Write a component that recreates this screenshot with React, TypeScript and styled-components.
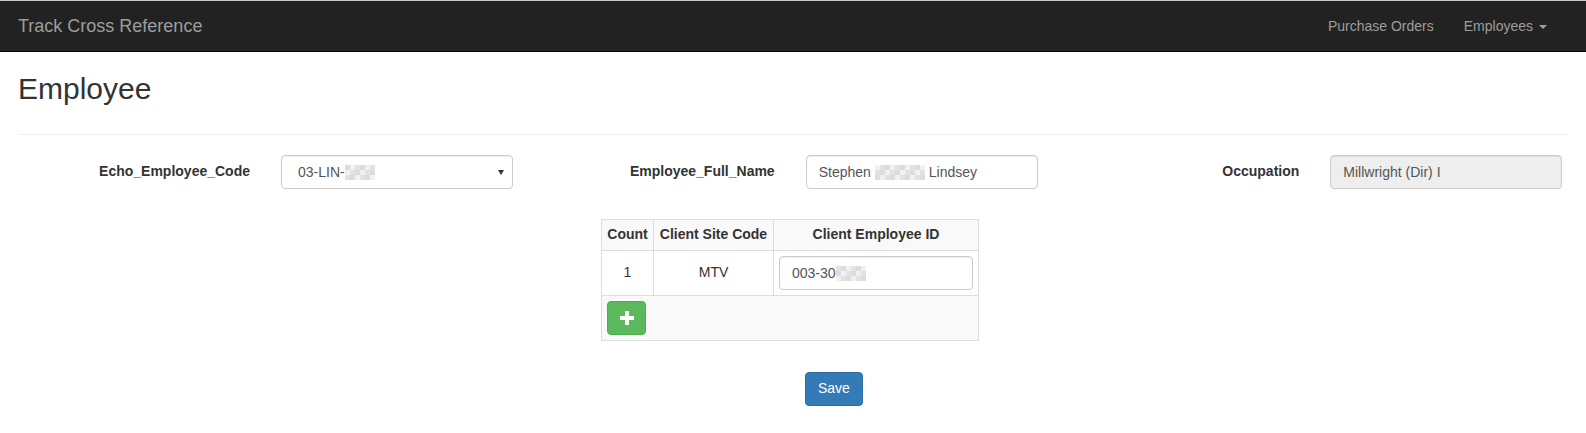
import styled, { createGlobalStyle } from 'styled-components'

const GlobalStyle = createGlobalStyle`
  html, body {
    margin: 0;
    padding: 0;
    background: #fff;
  }
  body {
    font-family: "Liberation Sans", Arial, sans-serif;
    font-size: 14px;
    line-height: 1.42857;
    color: #333;
  }
  * {
    box-sizing: border-box;
  }
`

const Navbar = styled.nav`
  display: flex;
  justify-content: space-between;
  align-items: stretch;
  height: 52px;
  background: #222;
  border-top: 1px solid #c9c9c9;
  border-bottom: 1px solid #080808;
  padding: 0 24px 0 18px;
`

const Brand = styled.div`
  font-size: 18px;
  line-height: 50px;
  color: #9d9d9d;
`

const NavLinks = styled.div`
  display: flex;
`

const NavLink = styled.a`
  display: flex;
  align-items: center;
  padding: 0 15px;
  line-height: 50px;
  color: #9d9d9d;
  text-decoration: none;
`

const Caret = styled.span`
  display: inline-block;
  width: 0;
  height: 0;
  margin-left: 6px;
  margin-top: 1px;
  border-top: 4px solid #9d9d9d;
  border-left: 4px solid transparent;
  border-right: 4px solid transparent;
`

const Page = styled.div`
  padding: 0 18px;
`

const Title = styled.h2`
  margin: 20px 0 10px;
  font-size: 30px;
  font-weight: 500;
  line-height: 1.1;
`

/* margin-top collapses with the title's margin-bottom */
const Rule = styled.hr`
  margin: 29px 0 20px;
  border: 0;
  border-top: 1px solid #eee;
`

const FormRow = styled.div`
  display: grid;
  grid-template-columns: repeat(3, 524.67px);
  margin: 0 -18px;
`

const FieldGroup = styled.div`
  display: grid;
  grid-template-columns: 250px 232px;
  column-gap: 31px;
  align-items: center;
`

const Label = styled.label`
  font-weight: bold;
  text-align: right;
`

const Field = styled.div<{ $disabled?: boolean; $padLeft?: number }>`
  display: flex;
  align-items: center;
  height: 34px;
  padding: 6px 12px 6px ${(p) => p.$padLeft ?? 12}px;
  color: #555;
  background: ${(p) => (p.$disabled ? '#eee' : '#fff')};
  border: 1px solid #ccc;
  border-radius: 4px;
  box-shadow: inset 0 1px 1px rgba(0, 0, 0, 0.075);
  white-space: nowrap;
`

const Value = styled.span`
  display: flex;
  align-items: center;
  line-height: 20px;
`

const SelectArrow = styled.span`
  margin-left: auto;
  width: 0;
  height: 0;
  border-top: 5px solid #333;
  border-left: 3.5px solid transparent;
  border-right: 3.5px solid transparent;
  margin-right: -4px;
`

const MosaicGrid = styled.span<{ $space: number }>`
  display: grid;
  grid-auto-flow: column;
  grid-template-rows: repeat(3, 5px);
  grid-auto-columns: 5px;
  margin: 1px ${(p) => p.$space}px 0;
  filter: blur(0.3px);
`

const Tile = styled.span<{ $c: string }>`
  background: ${(p) => p.$c};
`

const shades = ['#e2e2e2', '#d8d8d8', '#eeeeee', '#dcdcdc', '#e9e9e9', '#d2d2d2', '#f1f1f1', '#dedcd9', '#e5e6e8']

function Mosaic({ cols, seed, space = 0 }: { cols: number; seed: number; space?: number }) {
  const tiles = Array.from({ length: cols * 3 }, (_, i) => shades[(i * 7 + seed * 3 + (i % 3) * 5) % shades.length])
  return (
    <MosaicGrid $space={space}>
      {tiles.map((c, i) => (
        <Tile key={i} $c={c} />
      ))}
    </MosaicGrid>
  )
}

const TableWrap = styled.div`
  margin: 30px 0 0 583px;
`

const Table = styled.table`
  border-collapse: collapse;
  table-layout: fixed;
  width: 378px;
  border: 1px solid #ddd;
`

const Row = styled.tr<{ $striped?: boolean }>`
  background: ${(p) => (p.$striped ? '#f9f9f9' : '#fff')};
`

const Cell = styled.td<{ $head?: boolean; $w?: number }>`
  border: 1px solid #ddd;
  padding: 5px;
  text-align: center;
  vertical-align: middle;
  font-weight: ${(p) => (p.$head ? 'bold' : 'normal')};
  width: ${(p) => (p.$w ? `${p.$w}px` : 'auto')};
  white-space: nowrap;
`

const ActionCell = styled.td`
  border: 1px solid #ddd;
  padding: 5px;
  text-align: left;
`

const AddButton = styled.button`
  display: flex;
  align-items: center;
  justify-content: center;
  width: 39px;
  height: 34px;
  padding: 0;
  background: #5cb85c;
  border: 1px solid #4cae4c;
  border-radius: 4px;
  cursor: pointer;
`

const SaveRow = styled.div`
  margin-top: 31px;
  padding-left: 787px;
`

const SaveButton = styled.button`
  height: 34px;
  padding: 6px 12px;
  font-family: inherit;
  font-size: 14px;
  line-height: 1.42857;
  color: #fff;
  background: #337ab7;
  border: 1px solid #2e6da4;
  border-radius: 4px;
  cursor: pointer;
`

function App() {
  return (
    <>
      <GlobalStyle />
      <Navbar>
        <Brand>Track Cross Reference</Brand>
        <NavLinks>
          <NavLink>Purchase Orders</NavLink>
          <NavLink>
            Employees<Caret />
          </NavLink>
        </NavLinks>
      </Navbar>
      <Page>
        <Title>Employee</Title>
        <Rule />
        <FormRow>
          <FieldGroup>
            <Label>Echo_Employee_Code</Label>
            <Field $padLeft={16}>
              <Value>
                03-LIN-
                <Mosaic cols={6} seed={1} />
              </Value>
              <SelectArrow />
            </Field>
          </FieldGroup>
          <FieldGroup>
            <Label>Employee_Full_Name</Label>
            <Field>
              <Value>
                Stephen
                <Mosaic cols={10} seed={2} space={4} />
                Lindsey
              </Value>
            </Field>
          </FieldGroup>
          <FieldGroup>
            <Label>Occupation</Label>
            <Field $disabled>
              <Value>Millwright (Dir) I</Value>
            </Field>
          </FieldGroup>
        </FormRow>
        <TableWrap>
          <Table>
            <tbody>
              <Row $striped>
                <Cell $head $w={52}>Count</Cell>
                <Cell $head $w={120}>Client Site Code</Cell>
                <Cell $head>Client Employee ID</Cell>
              </Row>
              <Row>
                <Cell>1</Cell>
                <Cell>MTV</Cell>
                <Cell>
                  <Field>
                    <Value>
                      003-30
                      <Mosaic cols={6} seed={3} />
                    </Value>
                  </Field>
                </Cell>
              </Row>
              <Row $striped>
                <ActionCell colSpan={3}>
                  <AddButton>
                    <svg width="14" height="14" viewBox="0 0 14 14">
                      <rect x="5" y="0" width="4" height="14" fill="#fff" />
                      <rect x="0" y="5" width="14" height="4" fill="#fff" />
                    </svg>
                  </AddButton>
                </ActionCell>
              </Row>
            </tbody>
          </Table>
        </TableWrap>
        <SaveRow>
          <SaveButton>Save</SaveButton>
        </SaveRow>
      </Page>
    </>
  )
}

export default App
